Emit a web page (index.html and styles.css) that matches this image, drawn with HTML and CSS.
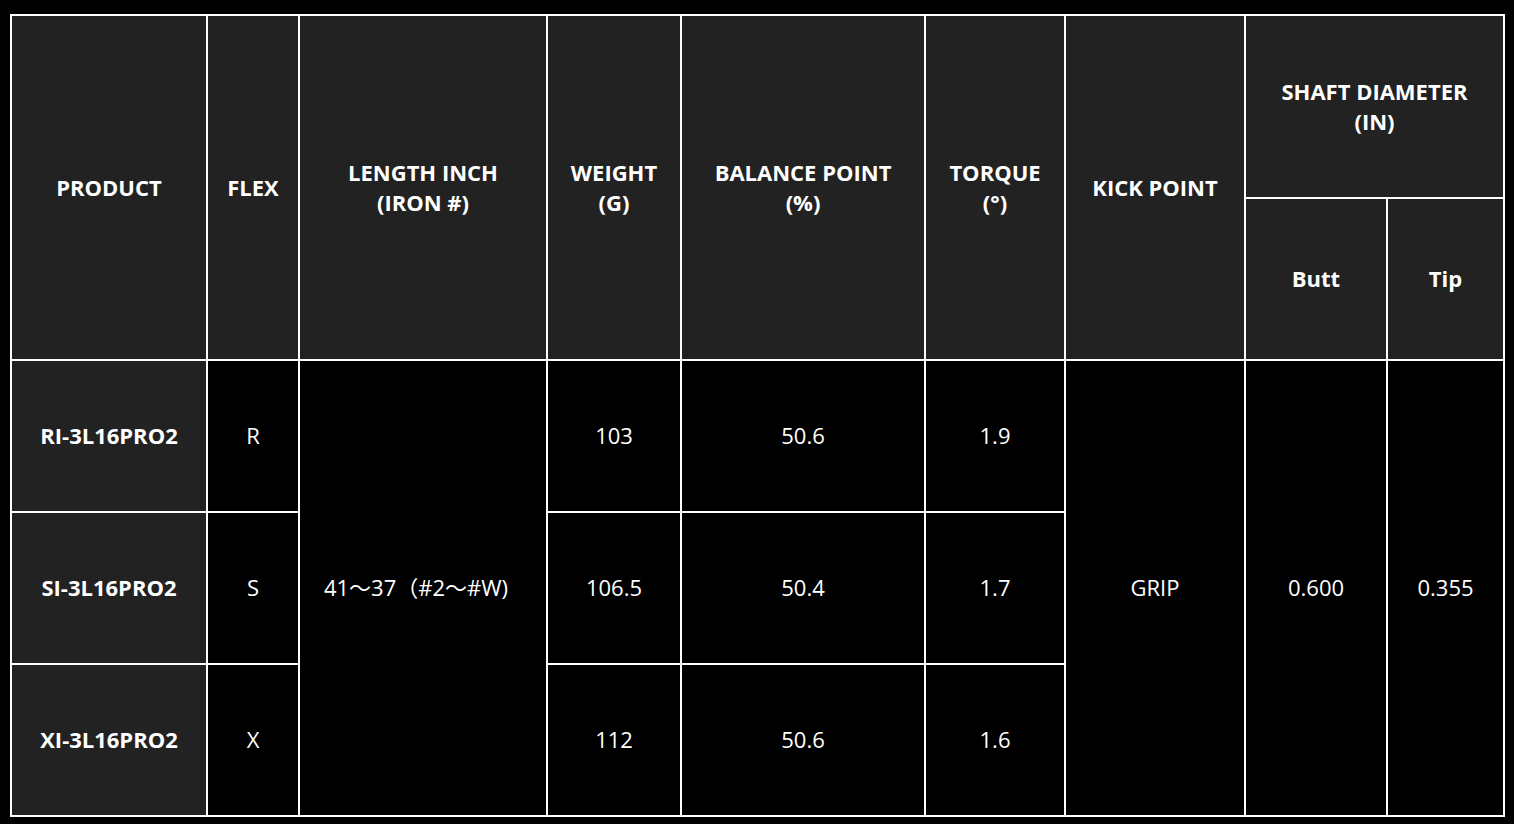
FILE: index.html
```html
<!DOCTYPE html>
<html>
<head>
<meta charset="utf-8">
<link rel="stylesheet" href="styles.css">
</head>
<body>
<table class="spec">
  <colgroup>
    <col class="c1"><col class="c2"><col class="c3"><col class="c4"><col class="c5"><col class="c6"><col class="c7"><col class="c8"><col class="c9">
  </colgroup>
  <thead>
    <tr class="h1">
      <th rowspan="2">PRODUCT</th>
      <th rowspan="2">FLEX</th>
      <th rowspan="2">LENGTH INCH<br>(IRON #)</th>
      <th rowspan="2">WEIGHT<br>(G)</th>
      <th rowspan="2">BALANCE POINT<br>(%)</th>
      <th rowspan="2">TORQUE<br>(°)</th>
      <th rowspan="2">KICK POINT</th>
      <th colspan="2">SHAFT DIAMETER<br>(IN)</th>
    </tr>
    <tr class="h2">
      <th>Butt</th>
      <th>Tip</th>
    </tr>
  </thead>
  <tbody>
    <tr>
      <td class="prod">RI-3L16PRO2</td>
      <td>R</td>
      <td rowspan="3" class="len">41～37（#2～#W)</td>
      <td>103</td>
      <td>50.6</td>
      <td>1.9</td>
      <td rowspan="3">GRIP</td>
      <td rowspan="3">0.600</td>
      <td rowspan="3">0.355</td>
    </tr>
    <tr>
      <td class="prod">SI-3L16PRO2</td>
      <td>S</td>
      <td>106.5</td>
      <td>50.4</td>
      <td>1.7</td>
    </tr>
    <tr>
      <td class="prod">XI-3L16PRO2</td>
      <td>X</td>
      <td>112</td>
      <td>50.6</td>
      <td>1.6</td>
    </tr>
  </tbody>
</table>
</body>
</html>
```

FILE: styles.css
```css
html, body {
  margin: 0;
  background: #000;
}
body {
  padding: 14px 10px 0 10px;
  font-family: "Open Sans", "Noto Sans CJK JP", sans-serif;
  color: #fff;
}
.spec {
  width: 1493px;
  table-layout: fixed;
  border-collapse: collapse;
  border: 2px solid #fff;
}
.c1 { width: 196px; }
.c2 { width: 92px; }
.c3 { width: 248px; }
.c4 { width: 134px; }
.c5 { width: 244px; }
.c6 { width: 140px; }
.c7 { width: 180px; }
.c8 { width: 142px; }
.c9 { width: 117px; }
.spec th, .spec td {
  border: 2px solid #fff;
  text-align: center;
  vertical-align: middle;
  padding: 0 0 2px 0;
  font-size: 22px;
  line-height: 30px;
}
.spec th {
  background: #222;
  font-weight: 700;
}
.spec td {
  background: #000;
  font-weight: 400;
}
.spec td.prod {
  background: #222;
  font-weight: 700;
}
.spec td.len {
  padding-right: 14px;
}
.h1 { height: 183px; }
.h2 { height: 162px; }
.spec tbody tr { height: 152px; }
```
